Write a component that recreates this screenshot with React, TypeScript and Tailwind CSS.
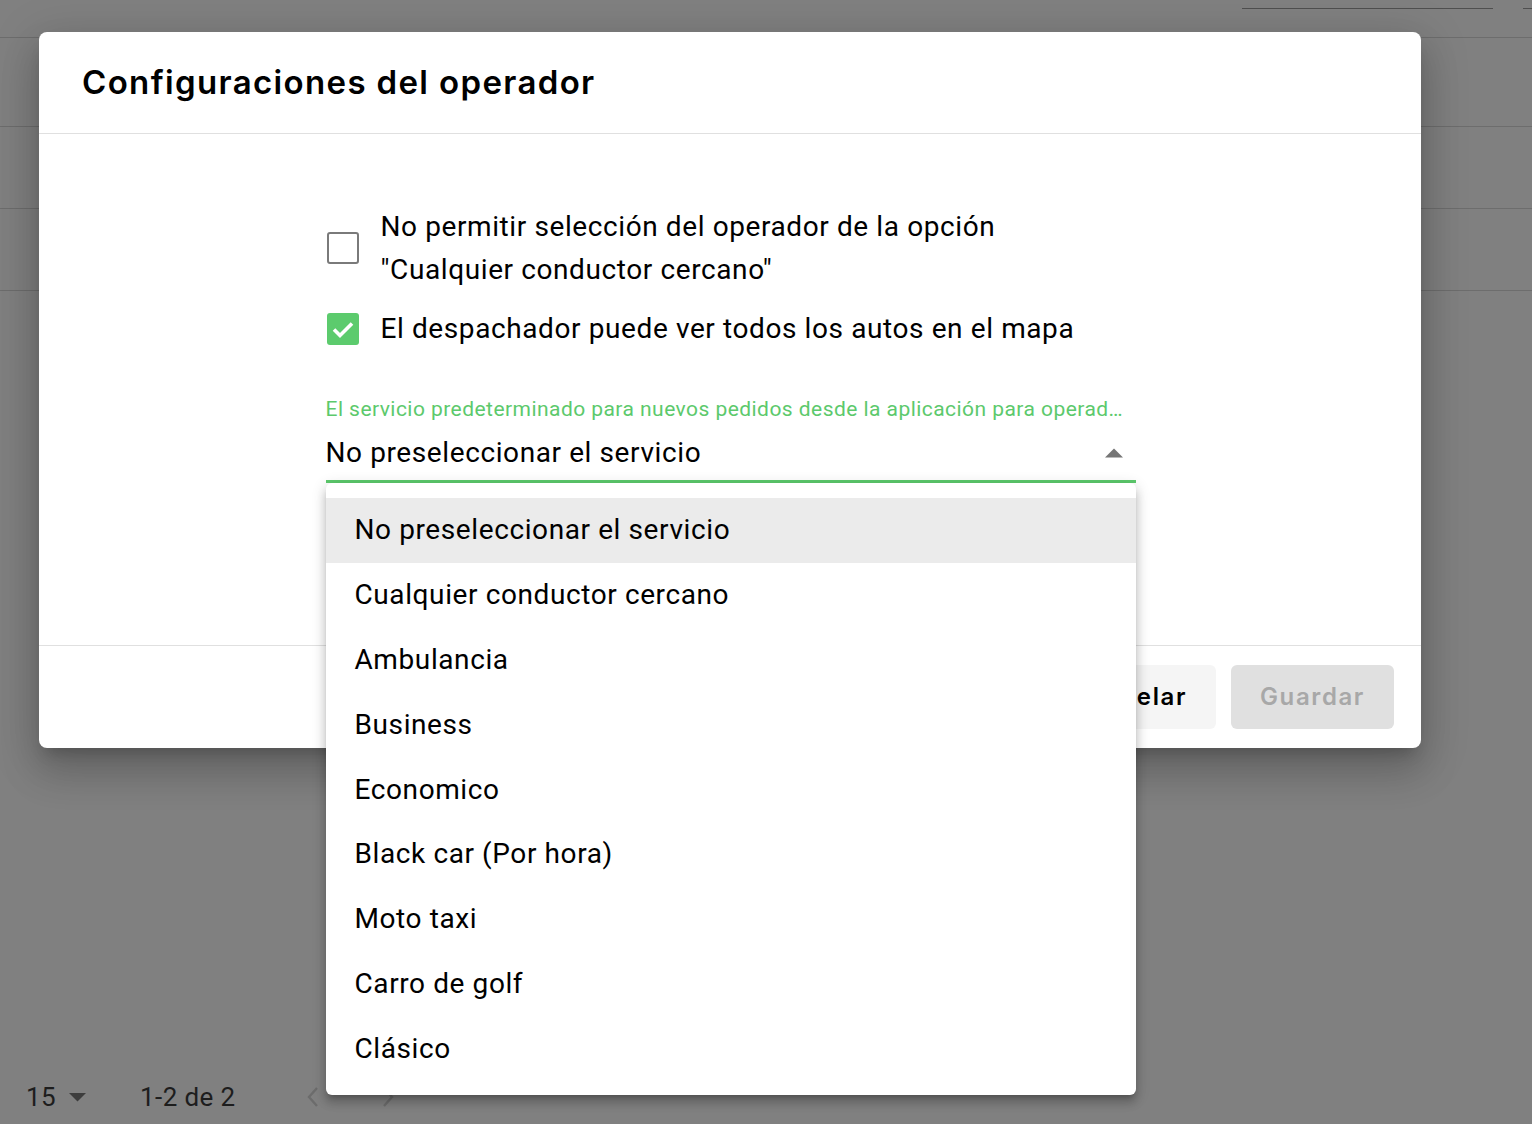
import React from "react";

const items = [
  "No preseleccionar el servicio",
  "Cualquier conductor cercano",
  "Ambulancia",
  "Business",
  "Economico",
  "Black car (Por hora)",
  "Moto taxi",
  "Carro de golf",
  "Clásico",
];

export default function App() {
  const roboto = { fontFamily: "Roboto, 'Liberation Sans', sans-serif" } as React.CSSProperties;
  return (
    <div className="relative w-[1532px] h-[1124px] overflow-hidden bg-[#808080]" style={roboto}>
      {/* backdrop page */}
      <div className="flex flex-col h-full">
        <div className="h-[37px] pt-[8px] flex">
          <div className="ml-[1242px] w-[251px] h-px bg-[#4f4f4f]" />
          <div className="ml-[30px] flex-1 h-px bg-[#4f4f4f]" />
        </div>
        <div className="h-[89px] border-t border-[#6d6d6d]" />
        <div className="h-[82px] border-t border-[#6d6d6d]" />
        <div className="h-[82px] border-t border-[#6d6d6d]" />
        <div className="flex-1 border-t border-[#6d6d6d]" />
        <div className="h-[54px] flex items-center pl-[26px] text-[26px] text-[#1d1d1d] tracking-[0.4px]">
          <span>15</span>
          <svg className="ml-[13px]" width="17" height="9" viewBox="0 0 17 9">
            <path d="M0 0 L17 0 L8.5 8.5 Z" fill="#3d3d3d" />
          </svg>
          <span className="ml-[54px]">1-2 de 2</span>
          <svg className="ml-[70px]" width="14" height="22" viewBox="0 0 14 22">
            <path d="M11 2 L3 11 L11 20" stroke="#6c6c6c" strokeWidth="2.4" fill="none" />
          </svg>
          <svg className="ml-[61px]" width="14" height="22" viewBox="0 0 14 22">
            <path d="M3 2 L11 11 L3 20" stroke="#6c6c6c" strokeWidth="2.4" fill="none" />
          </svg>
        </div>
      </div>

      {/* dialog */}
      <div className="absolute left-[39px] top-[32px] w-[1382px] h-[716px] bg-white rounded-[8px] shadow-[0_11px_15px_-7px_rgba(0,0,0,0.2),0_24px_38px_3px_rgba(0,0,0,0.14),0_9px_46px_8px_rgba(0,0,0,0.12)] flex flex-col">
        <div className="h-[102px] shrink-0 flex items-center pl-[43px] border-b border-[#e0e0e0]">
          <h1
            className="text-[33px] font-semibold text-black tracking-[1.35px]"
            style={{ fontFamily: "Inter, 'Liberation Sans', sans-serif" }}
          >
            Configuraciones del operador
          </h1>
        </div>

        <div className="flex-1 flex justify-center">
          <div className="w-[810px] pt-[71px] ml-[1px] tracking-[0.6px]">
            <div className="flex items-center">
              <div className="ml-[1px] w-[32px] h-[32px] rounded-[3px] border-[2.5px] border-[#7a7a7a] shrink-0" />
              <div className="ml-[22px] text-[28px] leading-[43px] text-black">
                No permitir selección del operador de la opción
                <br />
                "Cualquier conductor cercano"
              </div>
            </div>
            <div className="flex items-center mt-[16px]">
              <div className="ml-[1px] w-[32px] h-[32px] rounded-[3px] bg-[#5ccb6d] shrink-0 flex items-center justify-center">
                <svg width="32" height="32" viewBox="0 0 32 32">
                  <path d="M7 16.5 L13 22.5 L25 10.5" stroke="white" strokeWidth="3.6" fill="none" />
                </svg>
              </div>
              <div className="ml-[22px] text-[28px] leading-[43px] text-black">
                El despachador puede ver todos los autos en el mapa
              </div>
            </div>

            <div className="relative mt-[47px]">
              <div className="text-[21px] leading-[25px] text-[#5cc96c] whitespace-nowrap tracking-[0.45px]">
                El servicio predeterminado para nuevos pedidos desde la aplicación para operad…
              </div>
              <div className="mt-[9px] pb-[6px] border-b-[3px] border-[#5cc96c] flex items-center">
                <span className="text-[28px] leading-[43px] text-black">No preseleccionar el servicio</span>
                <svg className="ml-auto mr-[13px]" width="18" height="10" viewBox="0 0 18 10">
                  <path d="M0 9.5 L9 0.5 L18 9.5 Z" fill="#757575" />
                </svg>
              </div>

              {/* menu */}
              <div className="absolute left-0 top-full w-[810px] bg-white rounded-[6px] pt-[15px] pb-[14px] shadow-[0_5px_5px_-3px_rgba(0,0,0,0.2),0_8px_10px_1px_rgba(0,0,0,0.14),0_3px_14px_2px_rgba(0,0,0,0.12)] z-10">
                {items.map((it, i) => (
                  <div
                    key={it}
                    className={
                      "h-[64.8px] flex items-center pl-[29px] text-[28px] text-black " +
                      (i === 0 ? "bg-[#ebebeb]" : "")
                    }
                  >
                    {it}
                  </div>
                ))}
              </div>
            </div>
          </div>
        </div>

        <div
          className="h-[103px] shrink-0 border-t border-[#e0e0e0] flex items-center justify-end pr-[27px] gap-[15px]"
          style={{ fontFamily: "Inter, 'Liberation Sans', sans-serif" }}
        >
          <button className="h-[64px] px-[29px] rounded-[6px] bg-[#f5f5f5] text-black text-[24px] font-semibold tracking-[1.6px]">
            Cancelar
          </button>
          <button className="h-[64px] px-[29px] rounded-[6px] bg-[#e0e0e0] text-[#a8a8a8] text-[24px] font-semibold tracking-[1.6px]">
            Guardar
          </button>
        </div>
      </div>
    </div>
  );
}
